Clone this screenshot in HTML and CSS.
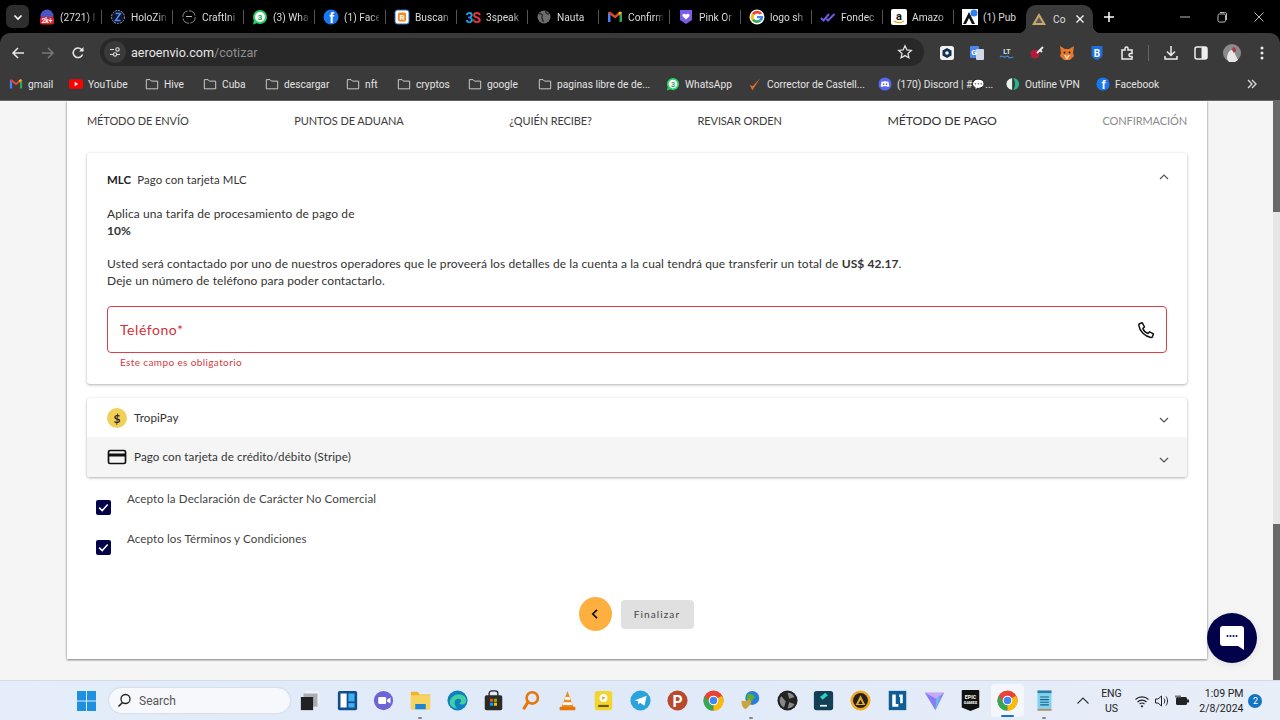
FILE: index.html
```html
<!DOCTYPE html>
<html lang="es">
<head>
<meta charset="utf-8">
<title>AeroEnvio - Cotizar</title>
<link rel="stylesheet" href="styles.css">
</head>
<body>
<div class="screen">
  <header class="chrome">
    <div class="tabstrip">
      <div class="tab-search"><svg width="12" height="12" viewBox="0 0 12 12"><path d="M2.5 4.5 6 8l3.5-3.5" fill="none" stroke="#fff" stroke-width="1.6"/></svg></div>
      <div class="tabs">
        <div class="tab"><svg class="ic" viewBox="0 0 16 16"><circle cx="8" cy="7" r="6.5" fill="#4a55c8"/><rect x="1" y="8" width="14" height="7.5" rx="2" fill="#d9262c"/><text x="8" y="14" class="mini">2k+</text></svg><span class="tab-t">(2721) I</span></div>
        <div class="tab"><svg class="ic" viewBox="0 0 16 16"><circle cx="8" cy="8" r="6.5" fill="#10152c" stroke="#8c94b0" stroke-dasharray="2 1"/><path d="M5.5 4.500h5L5.500 11.500h5" fill="none" stroke="#4c8df0" stroke-width="1.5"/></svg><span class="tab-t">HoloZin</span></div>
        <div class="tab"><svg class="ic" viewBox="0 0 16 16"><circle cx="8" cy="8" r="6.2" fill="none" stroke="#8a8a8a" stroke-dasharray="8 1.5"/><path d="M5 7.500h6" stroke="#bbb"/></svg><span class="tab-t">CraftIni</span></div>
        <div class="tab"><svg class="ic" viewBox="0 0 16 16"><circle cx="8" cy="8" r="7" fill="#25d366"/><path d="M1 15.500 2 11l3 3z" fill="#25d366"/><circle cx="8" cy="8" r="5" fill="#fff"/><text x="8" y="11" class="num g">3</text></svg><span class="tab-t">(3) Wha</span></div>
        <div class="tab"><svg class="ic" viewBox="0 0 16 16"><circle cx="8" cy="8" r="7.500" fill="#1877f2"/><text x="8.500" y="14" class="ff">f</text></svg><span class="tab-t">(1) Face</span></div>
        <div class="tab"><svg class="ic" viewBox="0 0 16 16"><rect x="1" y="1" width="14" height="14" rx="2.500" fill="#fff" stroke="#2b6fb8"/><rect x="4" y="3.500" width="8" height="9" rx="1.500" fill="#f08a24"/><text x="8" y="11.300" class="num w">R</text></svg><span class="tab-t">Buscan</span></div>
        <div class="tab"><svg class="ic" viewBox="0 0 16 16"><text x="4.500" y="13.500" class="tri">3</text><text x="11.500" y="13.500" class="trs">S</text></svg><span class="tab-t">3speak</span></div>
        <div class="tab"><svg class="ic" viewBox="0 0 16 16"><circle cx="8" cy="8" r="6.500" fill="#6d6d6d"/><path d="M3 5c3-1 4 1 3 3s2 3 1 5M10 2c-1 2 1 3 3 3" fill="none" stroke="#2b2b2b" stroke-width="1.400"/></svg><span class="tab-t">Nauta</span></div>
        <div class="tab"><svg class="ic" viewBox="0 0 16 16"><use href="#gmail"/></svg><span class="tab-t">Confirm</span></div>
        <div class="tab"><svg class="ic" viewBox="0 0 16 16"><path d="M2 1h12v10l-6 4-6-4z" fill="#7d5be6"/><path d="M8 10.500 4.800 7.400c-1.500-2 1.500-3.800 3.200-1.700 1.700-2.100 4.700-.3 3.200 1.700z" fill="#fff"/></svg><span class="tab-t">Pink Or</span></div>
        <div class="tab"><svg class="ic" viewBox="0 0 16 16"><circle cx="8" cy="8" r="7.500" fill="#fff"/><path d="M13 4.500A6 6 0 0 0 3 4.500l2.200 1.700A3.400 3.400 0 0 1 10.500 5.500z" fill="#ea4335"/><path d="M3 4.500a6 6 0 0 0 0 7l2.200-1.800a3.400 3.400 0 0 1 0-3.500z" fill="#fbbc05"/><path d="M3 11.500a6 6 0 0 0 9.200.7L10 10.500a3.400 3.400 0 0 1-4.800-.8z" fill="#34a853"/><path d="M8 7v2.200h3.300c-.2.600-.6 1-1.300 1.300l2.200 1.700C14 10.500 14.300 8.500 14 7z" fill="#4285f4"/></svg><span class="tab-t">logo sh</span></div>
        <div class="tab"><svg class="ic" viewBox="0 0 16 16"><path d="M1 9l2.500 2.500L9 5M6.500 10l1.500 1.500L14.500 5" fill="none" stroke="#6a5ce0" stroke-width="2"/></svg><span class="tab-t">Fondec</span></div>
        <div class="tab"><svg class="ic" viewBox="0 0 16 16"><rect width="16" height="16" rx="2" fill="#fff"/><text x="8" y="11" class="num k">a</text><path d="M3 12c3 2 7 2 10 0" fill="none" stroke="#f29a1f" stroke-width="1.300"/></svg><span class="tab-t">Amazo</span></div>
        <div class="tab tab-nosep"><svg class="ic" viewBox="0 0 16 16"><rect width="16" height="16" fill="#fff"/><path d="M1 15 7 3l6 12h-3L7 9l-3 6z" fill="#111"/><circle cx="12" cy="4" r="3.500" fill="#2f80ed"/></svg><span class="tab-t tab-pub">(1) Pub</span></div>
        <div class="tab tab-active"><svg class="ic" viewBox="0 0 16 16"><path d="M8 2 15 14H1z" fill="#c9a86a"/><path d="M8 6 11.500 12h-7z" fill="#5a5a5a"/></svg><span class="tab-t tab-short">Co</span><svg class="tab-x" width="10" height="10" viewBox="0 0 10 10"><path d="m1.500 1.500 7 7m0-7-7 7" stroke="#fff" stroke-width="1.300"/></svg></div>
      </div>
      <div class="new-tab"><svg width="12" height="12" viewBox="0 0 12 12"><path d="M6 1v10M1 6h10" stroke="#fff" stroke-width="1.500"/></svg></div>
      <div class="winctl">
        <svg width="12" height="12" viewBox="0 0 12 12"><path d="M1 6h10" stroke="#bbb"/></svg>
        <svg width="12" height="12" viewBox="0 0 12 12"><rect x="2" y="3" width="7.500" height="8" rx="1.500" fill="none" stroke="#bbb"/><path d="M4 1.500h4.500A1.500 1.500 0 0 1 10.500 3v6" fill="none" stroke="#bbb"/></svg>
        <svg width="12" height="12" viewBox="0 0 12 12"><path d="m1.500 1.500 9 9m0-9-9 9" stroke="#bbb"/></svg>
      </div>
    </div>
    <div class="toolbar">
      <div class="nav">
        <svg width="14" height="14" viewBox="0 0 14 14"><path d="M13 7H2M7 2 2 7l5 5" fill="none" stroke="#e8e8e8" stroke-width="1.500"/></svg>
        <svg width="14" height="14" viewBox="0 0 14 14"><path d="M1 7h11M7 2l5 5-5 5" fill="none" stroke="#777" stroke-width="1.500"/></svg>
        <svg width="14" height="14" viewBox="0 0 14 14"><path d="M11.500 8.500A4.800 4.800 0 1 1 10.500 3.500L12 5" fill="none" stroke="#e8e8e8" stroke-width="1.500"/><path d="M12.500 1v4.500H8z" fill="#e8e8e8"/></svg>
      </div>
      <div class="omnibox">
        <span class="tune"><svg width="12" height="12" viewBox="0 0 12 12"><path d="M1 3.500h4M8 8.500h3M1 8.500h3" stroke="#ddd" stroke-width="1.200"/><circle cx="8.500" cy="3.500" r="1.700" fill="none" stroke="#ddd" stroke-width="1.100"/><circle cx="6" cy="8.500" r="1.700" fill="none" stroke="#ddd" stroke-width="1.100"/></svg></span>
        <span class="url">aeroenvio.com<span class="url-path">/cotizar</span></span>
        <svg class="star" width="16" height="16" viewBox="0 0 16 16"><path d="m8 1.800 1.900 4.100 4.400.5-3.300 3 .9 4.400L8 11.600l-3.900 2.200.9-4.400-3.300-3 4.400-.5z" fill="none" stroke="#e0e0e0" stroke-width="1.300"/></svg>
      </div>
      <div class="exts">
        <span class="ext"><svg class="ic" viewBox="0 0 16 16"><rect x="1" y="1" width="14" height="14" rx="2.500" fill="#f2f2f2"/><path d="M8 3 12.500 5.500v5L8 13 3.500 10.500v-5z" fill="#12304f"/><circle cx="8" cy="8" r="1.800" fill="#f2f2f2"/></svg></span>
        <span class="ext"><svg class="ic" viewBox="0 0 16 16"><rect x="1" y="1" width="9" height="12" rx="1" fill="#4a86e8"/><rect x="7" y="4" width="8" height="11" rx="1" fill="#cfd8e6"/><text x="5" y="10" class="num w">G</text></svg></span>
        <span class="ext"><svg class="ic" viewBox="0 0 16 16"><text x="8" y="9" class="num b">LT</text><path d="M1 12c2-2 2.500 0 4.500 0s2-2 4 0 2.500 0 5 0" fill="none" stroke="#3c8fd6" stroke-width="1.200"/></svg></span>
        <span class="ext"><svg class="ic" viewBox="0 0 16 16"><circle cx="6" cy="9" r="4.500" fill="#b01c3c"/><path d="m8 8 6-6M11 5l2 2" stroke="#eee" stroke-width="1.800"/></svg></span>
        <span class="ext"><svg class="ic" viewBox="0 0 16 16"><path d="M1 1l5 3h4l5-3-1 7 1 3-4 4H5l-4-4 1-3z" fill="#e8782a"/><path d="M5 10h2l1 3 1-3h2l-3 5z" fill="#f6e2cf"/><circle cx="5.500" cy="7.500" r="1" fill="#222"/><circle cx="10.500" cy="7.500" r="1" fill="#222"/></svg></span>
        <span class="ext"><svg class="ic" viewBox="0 0 16 16"><path d="M2.500 1h11v8.500c0 3-3 4.500-5.500 5.500-2.500-1-5.500-2.500-5.500-5.500z" fill="#1e6fd9"/><text x="8" y="11.500" class="num w big">B</text></svg></span>
        <span class="ext"><svg class="ic" viewBox="0 0 16 16"><path d="M3 5h3V3.500a1.500 1.500 0 0 1 3 0V5h4v3.500h-1.500a1.500 1.500 0 0 0 0 3H13V14H3z" fill="none" stroke="#eee" stroke-width="1.500"/></svg></span>
        <span class="tool-sep"></span>
        <span class="ext"><svg class="ic" viewBox="0 0 16 16"><path d="M8 1v9M4 6.500 8 10.500l4-4M2 11v3h12v-3" fill="none" stroke="#eee" stroke-width="1.500"/></svg></span>
        <span class="ext"><svg class="ic" viewBox="0 0 16 16"><rect x="2" y="2" width="12" height="12" rx="2" fill="none" stroke="#eee" stroke-width="1.500"/><rect x="8.500" y="2" width="5.500" height="12" rx="1" fill="#eee"/></svg></span>
        <span class="ext"><svg class="avatar" viewBox="0 0 18 18"><circle cx="9" cy="9" r="9" fill="#8b8b8b"/><path d="M4 15c0-5 2-9 5-9 2 0 3 2 3 4l3 6-3 2H6z" fill="#e6e6e6"/><path d="M10 3c2 0 3 2 3 4l-2 2-2-3z" fill="#a83a4c"/></svg></span>
        <span class="ext"><svg class="ic" viewBox="0 0 16 16"><circle cx="8" cy="3" r="1.500" fill="#eee"/><circle cx="8" cy="8" r="1.500" fill="#eee"/><circle cx="8" cy="13" r="1.500" fill="#eee"/></svg></span>
      </div>
    </div>
    <nav class="bookmarks">
      <div class="bm"><svg class="bi" viewBox="0 0 16 16"><use href="#gmail"/></svg>gmail</div>
      <div class="bm"><svg class="bi" viewBox="0 0 16 16"><rect y="2.500" width="16" height="11" rx="3" fill="#f00"/><path d="m6.500 5.500 4 2.500-4 2.500z" fill="#fff"/></svg>YouTube</div>
      <div class="bm"><svg class="bi" viewBox="0 0 16 16"><use href="#folder"/></svg>Hive</div>
      <div class="bm"><svg class="bi" viewBox="0 0 16 16"><use href="#folder"/></svg>Cuba</div>
      <div class="bm"><svg class="bi" viewBox="0 0 16 16"><use href="#folder"/></svg>descargar</div>
      <div class="bm"><svg class="bi" viewBox="0 0 16 16"><use href="#folder"/></svg>nft</div>
      <div class="bm"><svg class="bi" viewBox="0 0 16 16"><use href="#folder"/></svg>cryptos</div>
      <div class="bm"><svg class="bi" viewBox="0 0 16 16"><use href="#folder"/></svg>google</div>
      <div class="bm"><svg class="bi" viewBox="0 0 16 16"><use href="#folder"/></svg>paginas libre de de...</div>
      <div class="bm"><svg class="bi" viewBox="0 0 16 16"><circle cx="8" cy="8" r="7" fill="#25d366"/><path d="M1 15.500 2 11l3 3z" fill="#25d366"/><circle cx="8" cy="8" r="5" fill="#fff"/><text x="8" y="11" class="num g">3</text></svg>WhatsApp</div>
      <div class="bm"><svg class="bi" viewBox="0 0 16 16"><path d="M2 9l3 6L14 1 5.500 10.500z" fill="#e8702a"/></svg>Corrector de Castell...</div>
      <div class="bm"><svg class="bi" viewBox="0 0 16 16"><circle cx="8" cy="8" r="7.500" fill="#5865f2"/><path d="M4 5.500c2.500-1 5.500-1 8 0l1 5-2 1-1-1H6l-1 1-2-1z" fill="#fff"/><circle cx="6.300" cy="8" r="1" fill="#5865f2"/><circle cx="9.700" cy="8" r="1" fill="#5865f2"/></svg>(170) Discord | #💬...</div>
      <div class="bm"><svg class="bi" viewBox="0 0 16 16"><path d="M7 1.500A6.500 6.500 0 0 0 7 14.500z" fill="#e8f4ea"/><path d="M8 1A7 7 0 0 1 8 15C11 12 11 4 8 1z" fill="#27b589"/></svg>Outline VPN</div>
      <div class="bm"><svg class="bi" viewBox="0 0 16 16"><circle cx="8" cy="8" r="7.500" fill="#1877f2"/><text x="8.500" y="14" class="ff">f</text></svg>Facebook</div>
      <div class="bm-more"><svg width="10" height="10" viewBox="0 0 10 10"><path d="m1 1 4 4-4 4M5 1l4 4-4 4" fill="none" stroke="#ddd" stroke-width="1.300"/></svg></div>
    </nav>
  </header>

  <div class="viewport">
    <main class="card">
      <div class="steps">
        <span>MÉTODO DE ENVÍO</span>
        <span>PUNTOS DE ADUANA</span>
        <span>¿QUIÉN RECIBE?</span>
        <span>REVISAR ORDEN</span>
        <span class="step-current">MÉTODO DE PAGO</span>
        <span class="step-next">CONFIRMACIÓN</span>
      </div>

      <section class="panel">
        <div class="panel-head">
          <span><b>MLC</b>&nbsp; Pago con tarjeta MLC</span>
          <svg class="chev chev-up" viewBox="0 0 12 12"><path d="M2 8 6 4l4 4" fill="none" stroke="#555" stroke-width="1.200"/></svg>
        </div>
        <div class="panel-body">
          <p>Aplica una tarifa de procesamiento de pago de<br><b>10%</b></p>
          <p>Usted será contactado por uno de nuestros operadores que le proveerá los detalles de la cuenta a la cual tendrá que transferir un total de <b>US$ 42.17</b>.<br>Deje un número de teléfono para poder contactarlo.</p>
          <div class="field">
            <span class="field-label">Teléfono*</span>
            <svg class="phone" viewBox="0 0 18 18"><path d="M2.500 2.800 5.300 1.800 7.500 6 5.800 7.500C6.800 10 8.800 11.800 11 12.500L12.600 10.800 16.500 12.800 15.500 15.600C15.200 16.300 14.500 16.500 13.800 16.400 7.800 15.500 2.800 10.500 1.800 4.300 1.700 3.600 1.900 3 2.500 2.800Z" fill="none" stroke="#111" stroke-width="1.500" stroke-linejoin="round"/></svg>
          </div>
          <div class="field-error">Este campo es obligatorio</div>
        </div>
      </section>

      <section class="panel panel-rows">
        <div class="row">
          <svg class="row-ic" viewBox="0 0 20 20"><circle cx="10" cy="10" r="10" fill="#f2cf57"/><text x="10" y="14.500" class="dollar">$</text></svg>
          <span class="row-t">TropiPay</span>
          <svg class="chev chev-down" viewBox="0 0 12 12"><path d="M2 4l4 4 4-4" fill="none" stroke="#555" stroke-width="1.200"/></svg>
        </div>
        <div class="row row-alt">
          <svg class="row-ic" viewBox="0 0 20 20"><path d="M3 3.500h14A1.500 1.500 0 0 1 18.500 5v10a1.500 1.500 0 0 1-1.500 1.500H3A1.500 1.500 0 0 1 1.500 15V5A1.500 1.500 0 0 1 3 3.500Z" fill="none" stroke="#111" stroke-width="1.700"/><rect x="2" y="6.500" width="16" height="3" fill="#111"/></svg>
          <span class="row-t">Pago con tarjeta de crédito/débito (Stripe)</span>
          <svg class="chev chev-down" viewBox="0 0 12 12"><path d="M2 4l4 4 4-4" fill="none" stroke="#555" stroke-width="1.200"/></svg>
        </div>
      </section>

      <div class="checks">
        <label class="check"><span class="box"><svg viewBox="0 0 15 15"><path d="m3.200 7.600 3 3 5.500-6" fill="none" stroke="#fff" stroke-width="1.500"/></svg></span><span>Acepto la Declaración de Carácter No Comercial</span></label>
        <label class="check"><span class="box"><svg viewBox="0 0 15 15"><path d="m3.200 7.600 3 3 5.500-6" fill="none" stroke="#fff" stroke-width="1.500"/></svg></span><span>Acepto los Términos y Condiciones</span></label>
      </div>

      <div class="actions">
        <button class="back" type="button"><svg width="12" height="12" viewBox="0 0 12 12"><path d="M8 1.800 3.800 6 8 10.200" fill="none" stroke="#111" stroke-width="1.700"/></svg></button>
        <button class="finish" type="button">Finalizar</button>
      </div>
    </main>
    <div class="scrollbar"><div class="thumb-a"></div><div class="thumb-gap"></div><div class="thumb-b"></div></div>
    <div class="chat"><svg width="26" height="26" viewBox="0 0 26 26"><path d="M4 1h18a3 3 0 0 1 3 3v21l-6-4H4a3 3 0 0 1-3-3V4a3 3 0 0 1 3-3Z" fill="#fff"/><g fill="#02024a"><circle cx="8.500" cy="11" r="1"/><circle cx="11.500" cy="11" r="1"/><circle cx="14.500" cy="11" r="1"/><circle cx="17.500" cy="11" r="1"/></g></svg></div>
  </div>

  <footer class="taskbar">
    <svg class="win" viewBox="0 0 19 20"><g fill="#1e90e0"><rect x="0" y="0" width="9" height="9.500"/><rect x="10" y="0" width="9" height="9.500"/><rect x="0" y="10.500" width="9" height="9.500"/><rect x="10" y="10.500" width="9" height="9.500"/></g></svg>
    <div class="search"><svg width="15" height="15" viewBox="0 0 15 15"><circle cx="8.500" cy="6" r="4.500" fill="none" stroke="#222" stroke-width="1.300"/><path d="M5.500 9.500 1.500 13.500" stroke="#222" stroke-width="1.600"/></svg><span>Search</span></div>
    <div class="apps">
      <div class="app"><svg class="tb" viewBox="0 0 24 24"><rect x="6" y="1" width="16" height="15" fill="#eef1f6"/><rect x="4" y="4" width="16" height="15" fill="#a9aeb5"/><rect x="1" y="8" width="14" height="15" fill="#222"/></svg></div>
      <div class="app"><svg class="tb" viewBox="0 0 24 24"><rect x="1" y="1" width="22" height="22" rx="2" fill="#124f8a"/><rect x="4" y="4" width="7" height="16" fill="#fff"/><rect x="13" y="4" width="7" height="9" fill="#3fb0f0"/><rect x="13" y="15" width="7" height="5" fill="#3fb0f0"/></svg></div>
      <div class="app"><svg class="tb" viewBox="0 0 24 24"><circle cx="12" cy="12" r="11" fill="#6e64d6"/><rect x="6" y="8" width="9" height="8" rx="1.500" fill="#fff"/><path d="m16 11 4-2.500v7L16 13z" fill="#fff"/></svg></div>
      <div class="app app-dot"><svg class="tb" viewBox="0 0 24 24"><path d="M1 2h8l2 3h12v17H1z" fill="#f0b429"/><rect x="1" y="6" width="22" height="16" fill="#f8d35e"/><rect x="6" y="16" width="12" height="6" fill="#1a86d8"/></svg></div>
      <div class="app"><svg class="tb" viewBox="0 0 24 24"><circle cx="12" cy="12" r="11.500" fill="#0f7fc2"/><path d="M3 14C4 7 12 3 18 6c4 2 5 6 3 9-2 2-6 2-7 0 3-1 3-5-1-5-5 0-6 7-1 11-5 0-9-3-9-7z" fill="#3fd0a0"/></svg></div>
      <div class="app"><svg class="tb" viewBox="0 0 24 24"><path d="M7 7V4a3 3 0 0 1 3-3h4a3 3 0 0 1 3 3v3" fill="none" stroke="#222" stroke-width="1.500"/><rect x="2" y="6" width="20" height="17" rx="2" fill="#2b2b2b"/><rect x="8" y="10" width="3.500" height="3.500" fill="#f25022"/><rect x="12.500" y="10" width="3.500" height="3.500" fill="#7fba00"/><rect x="8" y="14.500" width="3.500" height="3.500" fill="#00a4ef"/><rect x="12.500" y="14.500" width="3.500" height="3.500" fill="#ffb900"/></svg></div>
      <div class="app"><svg class="tb" viewBox="0 0 24 24"><circle cx="14" cy="9" r="6.500" fill="none" stroke="#e8750a" stroke-width="3"/><path d="M9 14 4 22" stroke="#e8750a" stroke-width="3.500"/></svg></div>
      <div class="app"><svg class="tb" viewBox="0 0 24 24"><path d="M12 1 19 20H5z" fill="#f28c1e"/><path d="M9.800 8h4.400l1 3H8.800zM7.500 14h9l1 3h-11z" fill="#fff"/><rect x="3" y="19" width="18" height="4" rx="1" fill="#e8750a"/></svg></div>
      <div class="app"><svg class="tb" viewBox="0 0 24 24"><rect x="2" y="1" width="20" height="22" rx="3" fill="#f4d52e"/><circle cx="12" cy="9" r="4.500" fill="#fff"/><path d="m10.500 7 4 2-4 2z" fill="#d8ae10"/><rect x="6" y="17" width="12" height="2.500" fill="#665a10"/></svg></div>
      <div class="app"><svg class="tb" viewBox="0 0 24 24"><circle cx="12" cy="12" r="11.500" fill="#2aa3dc"/><path d="M5 12 19 6.500 16.500 18l-5-3.500-2 2-.5-4z" fill="#fff"/></svg></div>
      <div class="app"><svg class="tb" viewBox="0 0 24 24"><circle cx="12" cy="12" r="11.500" fill="#b8492a"/><text x="12" y="19" class="psi">P</text></svg></div>
      <div class="app"><svg class="tb" viewBox="0 0 24 24"><use href="#chrome"/></svg></div>
      <div class="app app-dot"><svg class="tb" viewBox="0 0 24 24"><circle cx="14" cy="9" r="8" fill="#2a7fd4"/><path d="M9 5c3-2 6 0 8 3l-4 5-6-3z" fill="#5bb030"/><path d="M2 12c3 1 6 1 9-2l2 4c-2 4-5 7-7 8-3-2-5-6-4-10z" fill="#c9a53a"/></svg></div>
      <div class="app"><svg class="tb" viewBox="0 0 24 24"><circle cx="12" cy="12" r="11.500" fill="#222"/><path d="M12 3a9 9 0 0 1 8 5l-6 2zM4 8a9 9 0 0 1 1-1l5 6-2 7a9 9 0 0 1-4-12zM20 16a9 9 0 0 1-8 5l2-7z" fill="#888"/></svg></div>
      <div class="app"><svg class="tb" viewBox="0 0 24 24"><rect x="1" y="1" width="22" height="22" rx="3" fill="#123f54"/><path d="m8 8 6-5 3 3-6 5z" fill="#2cd3c5"/><rect x="8" y="17" width="8" height="2" fill="#e8f4f4"/></svg></div>
      <div class="app"><svg class="tb" viewBox="0 0 24 24"><circle cx="12" cy="12" r="11.500" fill="#f0a81c"/><circle cx="12" cy="12" r="8.500" fill="#222"/><path d="M12 6 17.500 17h-11z" fill="#f0a81c"/><path d="M12 11l2.500 5h-5z" fill="#222"/></svg></div>
      <div class="app"><svg class="tb" viewBox="0 0 24 24"><rect x="2" y="1" width="20" height="22" fill="#0f5d96"/><path d="M6 5h4v11h3v3H6zM14 5h4v10h-3V8h-1z" fill="#fff"/></svg></div>
      <div class="app"><svg class="tb" viewBox="0 0 24 24"><path d="M1 3h22l-10 20z" fill="#8a7cf0"/><path d="M1 3h22L14 10z" fill="#c8a8f8"/><path d="M13 23 14 10l5-3z" fill="#5cc0f0"/></svg></div>
      <div class="app"><svg class="tb" viewBox="0 0 24 24"><path d="M3 0h18a1 1 0 0 1 1 1v19l-10 4-10-4V1a1 1 0 0 1 1-1Z" fill="#111"/><text x="12" y="10" class="epic">EPIC</text><text x="12" y="16.500" class="epic2">GAMES</text></svg></div>
      <div class="app app-on"><svg class="tb" viewBox="0 0 24 24"><use href="#chrome"/></svg></div>
      <div class="app app-dot"><svg class="tb" viewBox="0 0 24 24"><rect x="4" y="2" width="16" height="20" fill="#7fd2f0"/><rect x="4" y="0.500" width="16" height="3" fill="#2b7da8"/><path d="M7 8h10M7 11h10M7 14h10M7 17h10" stroke="#1a5f86" stroke-width="1.200"/><rect x="4" y="22" width="16" height="1.500" fill="#b06a2a"/></svg></div>
    </div>
    <svg class="tray-caret" width="14" height="14" viewBox="0 0 14 14"><path d="m1.500 9.500 5.500-5.500 5.500 5.500" fill="none" stroke="#333" stroke-width="1.100"/></svg>
    <div class="lang"><span>ENG</span><span>US</span></div>
    <div class="tray">
      <svg width="16" height="16" viewBox="0 0 16 16"><path d="M1.500 6.500C5 3 11 3 14.500 6.500M3.500 9c2.500-2.500 6.500-2.500 9 0M5.500 11c1.500-1.200 3.500-1.200 5 0" fill="none" stroke="#222" stroke-width="1.100"/><circle cx="8" cy="13.300" r="1.100" fill="#222"/></svg>
      <svg width="16" height="16" viewBox="0 0 16 16"><path d="M1.500 6v4h2.500l3.500 3V3L4 6z" fill="none" stroke="#222"/><path d="M10 5.500c1 1.500 1 3.500 0 5M12 3.500c2 2.500 2 6.500 0 9" fill="none" stroke="#222"/></svg>
      <svg width="16" height="16" viewBox="0 0 16 16"><rect x="2" y="4" width="11" height="8" rx="1.500" fill="#222"/><rect x="13" y="6.500" width="2" height="3" fill="#222"/><rect x="1" y="2.500" width="6" height="2" fill="#777"/></svg>
    </div>
    <div class="clock"><span>1:09 PM</span><span>2/8/2024</span></div>
    <div class="badge">2</div>
  </footer>
</div>

<svg class="defs" width="0" height="0" aria-hidden="true">
  <defs>
    <symbol id="gmail" viewBox="0 0 16 16"><path d="M1 3.500 3.500 5v8H1.500A.5.500 0 0 1 1 12.500z" fill="#4285f4"/><path d="M15 3.500 12.500 5v8h2a.5.500 0 0 0 .5-.5z" fill="#34a853"/><path d="M1 3.500 3 2.500 8 6.500l5-4 2 1L12.500 6 8 9.500 3.500 6z" fill="#ea4335"/><path d="M12.500 6 15 3.500 13 2.500 11 4z" fill="#fbbc05"/></symbol>
    <symbol id="folder" viewBox="0 0 16 16"><path d="M1.500 3h4.300l1.500 1.700h7.200v8.800h-13z" fill="none" stroke="#cfcfcf" stroke-width="1.100"/></symbol>
    <symbol id="chrome" viewBox="0 0 24 24"><circle cx="12" cy="12" r="11.500" fill="#ea4335"/><path d="M12 12 2.500 6.500A11 11 0 0 0 12 23.500z" fill="#34a853"/><path d="M12 12V23.500A11 11 0 0 0 21.500 6.500z" fill="#fbbc05"/><path d="M12 7h9.500A11 11 0 0 0 2.500 6.500L7 14z" fill="#ea4335"/><circle cx="12" cy="12" r="5.500" fill="#fff"/><circle cx="12" cy="12" r="4.300" fill="#4285f4"/></symbol>
  </defs>
</svg>
</body>
</html>
```
FILE: styles.css
```css
* { box-sizing: border-box; }
html, body { margin: 0; padding: 0; }
body { width: 1280px; height: 720px; overflow: hidden; font-family: "Lato", "Liberation Sans", sans-serif; }
p { margin: 0 0 16px; }
button { font: inherit; border: 0; padding: 0; }
.defs { display: block; }

.screen { width: 1280px; height: 720px; display: flex; flex-direction: column; }

/* browser chrome */
.chrome { height: 101px; flex: none; background: #000; color: #e6e6e6; font-family: "Roboto", "Liberation Sans", sans-serif; }
.tabstrip { height: 33px; display: flex; align-items: center; padding-left: 6px; }
.ic { width: 16px; height: 16px; flex: none; display: block; }
.tab-search { width: 23px; height: 23px; border-radius: 6px; background: #2e2e2e; display: flex; align-items: center; justify-content: center; margin-right: 2px; }
.tabs { display: flex; height: 33px; }
.tab { width: 71px; height: 33px; padding: 1px 7px 0 8px; display: flex; align-items: center; gap: 5px; position: relative; }
.tab:not(.tab-active):not(.tab-nosep)::after { content: ""; width: 1px; height: 14px; background: #555; position: absolute; right: 0; top: 10px; }
.tab-t { font-size: 10.200px; white-space: nowrap; flex: 1; min-width: 0; color: #dcdcdc; -webkit-mask-image: linear-gradient(90deg, #000 75%, rgba(0,0,0,.25) 100%); mask-image: linear-gradient(90deg, #000 75%, rgba(0,0,0,.25) 100%); }
.tab-pub { -webkit-mask-image: none; mask-image: none; }
.tab-short { flex: none; -webkit-mask-image: none; mask-image: none; margin-left: 1px; }
.tab-active { width: 67px; height: 28px; margin: 5px 0 0 1px; padding: 0 8px 0 5px; background: #3a3a3a; border-radius: 10px 10px 0 0; }
.tab-active::before, .tab-active::after { content: ""; position: absolute; bottom: 0; width: 8px; height: 8px; }
.tab-active::before { left: -8px; background: radial-gradient(circle at 0 0, transparent 8px, #3a3a3a 8.500px); }
.tab-active::after { right: -8px; background: radial-gradient(circle at 100% 0, transparent 8px, #3a3a3a 8.500px); }
.tab-x { margin-left: auto; flex: none; }
.new-tab { width: 32px; display: flex; align-items: center; justify-content: center; }
.winctl { margin-left: auto; display: flex; gap: 25px; padding-right: 15px; padding-top: 1px; }

.mini { font: bold 6.500px "Roboto", sans-serif; fill: #fff; text-anchor: middle; }
.num { font: bold 8px "Roboto", sans-serif; text-anchor: middle; }
.g { fill: #1b9e50; } .w { fill: #fff; } .k { fill: #111; font-size: 11px; } .b { fill: #d8e4ee; font-size: 7px; }
.big { font-size: 10px; }
.ff { font: bold 14px "Liberation Sans", sans-serif; fill: #fff; text-anchor: middle; }
.tri { font: bold 14px "Roboto", sans-serif; fill: #1aa5e6; text-anchor: middle; }
.trs { font: bold 14px "Roboto", sans-serif; fill: #e8344e; text-anchor: middle; }
.psi { font: bold 18px "Roboto", sans-serif; fill: #fff; text-anchor: middle; }
.dollar { font: bold 12px "Lato", sans-serif; fill: #2a2a2a; text-anchor: middle; }
.epic { font: bold 6px "Roboto", sans-serif; fill: #fff; text-anchor: middle; }
.epic2 { font: bold 4.500px "Roboto", sans-serif; fill: #fff; text-anchor: middle; }

.toolbar { height: 34px; padding-top: 4px; background: #3a3a3a; border-radius: 10px 10px 0 0; display: flex; align-items: center; position: relative; }
.nav { width: 100px; flex: none; display: flex; padding: 1px 0 0 11px; gap: 16px; }
.omnibox { width: 824px; height: 28px; border-radius: 14px; background: #282828; display: flex; align-items: center; padding: 0 11px 0 4px; flex: none; }
.tune { width: 22px; height: 22px; border-radius: 50%; background: #3a3a3a; display: flex; align-items: center; justify-content: center; margin-right: 5px; }
.url { font-size: 12.600px; color: #e6e6e6; flex: 1; }
.url-path { color: #8e8e8e; }
.star { flex: none; }
.exts { flex: 1; display: grid; grid-template-columns: 30px 30px 30px 30px 30px 29px 31px 13px 31px 30px 31px 30px; align-items: center; padding: 1px 0 0 8px; }
.ext { display: flex; justify-content: center; }
.avatar { width: 18px; height: 18px; display: block; }
.tool-sep { width: 1px; height: 16px; background: #666; justify-self: center; }

.bookmarks { height: 34px; padding-top: 1px; background: #3a3a3a; display: grid; grid-template-columns: 60px 76px 58px 62px 81px 51px 71px 70px 128px 82px 130px 128px 90px 151px 20px; align-items: center; padding-left: 9px; font-size: 10.200px; color: #e4e4e4; border-bottom: 1px solid #6a6a6a; }
.bm { display: flex; align-items: center; gap: 5px; white-space: nowrap; }
.bi { width: 14px; height: 14px; flex: none; }
.bm-more { display: flex; }

/* page */
.viewport { flex: 1; min-height: 0; background: #f5f5f5; display: flex; padding-left: 67px; position: relative; }
.card { width: 1140px; height: 558px; background: #fff; padding: 0 20px; box-shadow: 0 1px 2px rgba(0,0,0,.45), 0 0 3px rgba(0,0,0,.12); color: #333; font-size: 12px; letter-spacing: .1px; line-height: 17px; }
.scrollbar { width: 7px; margin-left: auto; display: flex; flex-direction: column; background: #e6e6e6; }
.thumb-a { height: 111px; background: #686868; }
.thumb-gap { height: 312px; }
.thumb-b { flex: 1; background: #686868; }

.steps { height: 52px; padding-top: 11px; display: flex; justify-content: space-between; align-items: flex-start; color: #3c3c3c; font-size: 11px; letter-spacing: -.1px; }
.step-current { font-size: 12.300px; color: #333; line-height: 18px; }
.step-next { color: #8a8a8a; }

.panel { background: #fff; box-shadow: 0 1px 3px rgba(0,0,0,.3), 0 0 1px rgba(0,0,0,.1); border-radius: 3px; }
.panel-head { height: 52px; display: flex; align-items: center; justify-content: space-between; padding: 0 18px 0 20px; font-size: 11.400px; }
.panel-head b { color: #222; }
.chev { width: 12px; height: 12px; flex: none; margin-right: -1px; }
.chev-up { margin-top: -5px; }
.chev-down { margin-top: 5px; }
.panel-body { padding: 0 20px; height: 179px; }
.field { height: 47px; border: 1px solid #dc3f45; border-radius: 4px; display: flex; align-items: center; justify-content: space-between; padding: 0 11px 0 12px; margin-top: 17px; }
.field-label { font-size: 14px; color: #d2303a; letter-spacing: .55px; }
.phone { width: 18px; height: 18px; }
.field-error { margin: 2px 0 0 13px; font-size: 10px; line-height: 15px; color: #d63a42; letter-spacing: .38px; }

.panel-rows { margin-top: 14px; }
.row { height: 39px; display: flex; align-items: center; padding: 0 18px 0 20px; gap: 7px; color: #333; font-size: 11.600px; }
.row-alt { height: 40px; background: #f5f5f5; border-radius: 0 0 3px 3px; }
.row-ic { width: 20px; height: 20px; flex: none; }
.row-t { flex: 1; margin-top: -1px; }

.checks { margin-top: 13px; padding-left: 9px; font-size: 11.600px; }
.check { height: 40px; display: flex; gap: 16px; color: #444; }
.box { width: 15px; height: 15px; margin-top: 10px; background: #02024a; border-radius: 2px; display: block; flex: none; }
.box svg { display: block; width: 15px; height: 15px; }

.actions { margin-top: 27px; padding-right: 2px; display: flex; align-items: center; justify-content: center; gap: 9px; }
.back { width: 33px; height: 34px; border-radius: 50%; background: #fdb03f; display: flex; align-items: center; justify-content: center; }
.finish { width: 73px; height: 29px; border-radius: 4px; background: #e0e0e0; color: #444; font-size: 10px; letter-spacing: 1.100px; font-family: "Lato", sans-serif; }
.chat { position: absolute; left: 1207px; top: 512px; width: 50px; height: 50px; border-radius: 50%; background: #02024a; display: flex; align-items: center; justify-content: center; box-shadow: 0 2px 8px rgba(0,0,0,.08); }

/* taskbar */
.taskbar { height: 40px; flex: none; background: linear-gradient(90deg, #e4edf9, #dfe9f8 45%, #e8eef8); border-top: 1px solid #d5dbe6; display: flex; align-items: center; padding-left: 77px; color: #222; font-family: "Roboto", "Liberation Sans", sans-serif; }
.win { width: 19px; height: 20px; flex: none; }
.search { width: 181px; height: 25px; margin-left: 13px; border-radius: 13px; background: #f6f8fc; box-shadow: 0 0 2px rgba(0,0,0,.18); display: flex; align-items: center; gap: 7px; padding-left: 8px; font-size: 12px; color: #555; flex: none; }
.apps { display: grid; grid-template-columns: repeat(21, 36.700px); margin-left: 2px; height: 39px; flex: none; }
.app { display: flex; align-items: center; justify-content: center; position: relative; }
.tb { width: 21px; height: 21px; display: block; }
.app-dot::after { content: ""; position: absolute; bottom: 1px; left: 50%; width: 4px; height: 2px; margin-left: -2px; background: #888; border-radius: 1px; }
.app-on { background: #f3f6fb; border-radius: 4px; margin: 3px 2px; }
.app-on::after { content: ""; position: absolute; bottom: 0; left: 50%; width: 13px; height: 2px; margin-left: -6px; background: #1870c8; border-radius: 1px; }
.tray-caret { margin-left: 14px; flex: none; }
.lang { width: 28px; margin-left: 7px; display: flex; flex-direction: column; align-items: center; font-size: 10.500px; line-height: 15px; flex: none; }
.tray { display: flex; gap: 4px; margin-left: 9px; flex: none; }
.clock { width: 46px; margin-left: 7px; display: flex; flex-direction: column; align-items: flex-end; font-size: 10.500px; line-height: 15px; flex: none; }
.badge { width: 14px; height: 14px; border-radius: 50%; background: #1474c4; color: #fff; font-size: 9px; display: flex; align-items: center; justify-content: center; margin-left: 5px; flex: none; }
```
